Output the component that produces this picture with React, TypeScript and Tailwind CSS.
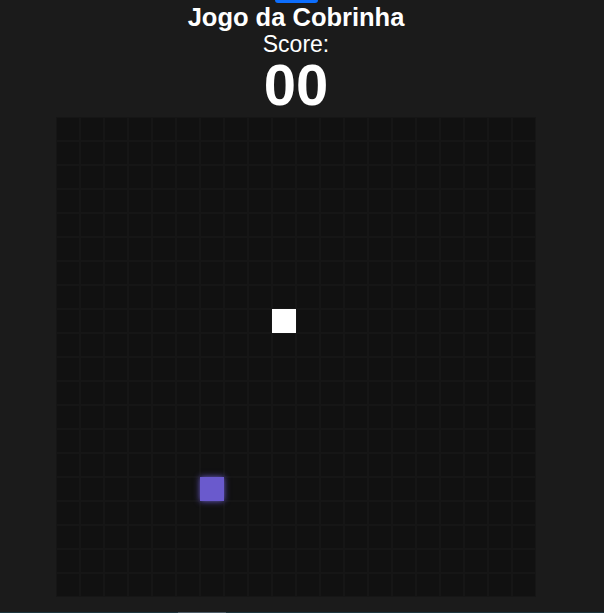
import React from "react";

const COLS = 20;
const ROWS = 20;
const snake = [{ x: 9, y: 8 }];
const food = { x: 6, y: 15 };

export default function App() {
  const cells = [];
  for (let y = 0; y < ROWS; y++) {
    for (let x = 0; x < COLS; x++) {
      const isSnake = snake.some((s) => s.x === x && s.y === y);
      const isFood = food.x === x && food.y === y;
      let cls = "w-[24px] h-[24px] border border-[#161616] bg-[#111111]";
      if (isSnake) cls = "w-[24px] h-[24px] bg-white";
      if (isFood)
        cls =
          "w-[24px] h-[24px] bg-[#6a5acd] shadow-[0_0_6px_#6a5acd] relative z-10";
      cells.push(<div key={`${x}-${y}`} className={cls} />);
    }
  }
  return (
    <div
      className="min-h-screen w-full bg-[#1b1b1b] flex flex-col items-center text-white overflow-hidden"
      style={{ fontFamily: '"Liberation Sans", Arial, sans-serif' }}
    >
      <div className="w-full pr-[12px] flex flex-col items-center">
        <div className="w-[43px] h-[3px] rounded-b-[3px] bg-[#0d6efd]" />
        <div className="mt-[1px] text-[25.5px] leading-[26px] font-bold">
          Jogo da Cobrinha
        </div>
        <div className="mt-[3px] text-[23px] leading-[23px]">Score:</div>
        <div className="text-[58px] leading-[58px] font-bold">00</div>
        <div className="mt-[3px] grid grid-cols-[repeat(20,24px)] w-[480px] h-[480px] bg-[#111111]">
          {cells}
        </div>
      </div>
      <div className="mt-[15px] h-px w-full bg-[#1c343c] flex">
        <div className="ml-[178px] w-[48px] h-px bg-[#4b5b66]" />
      </div>
    </div>
  );
}
